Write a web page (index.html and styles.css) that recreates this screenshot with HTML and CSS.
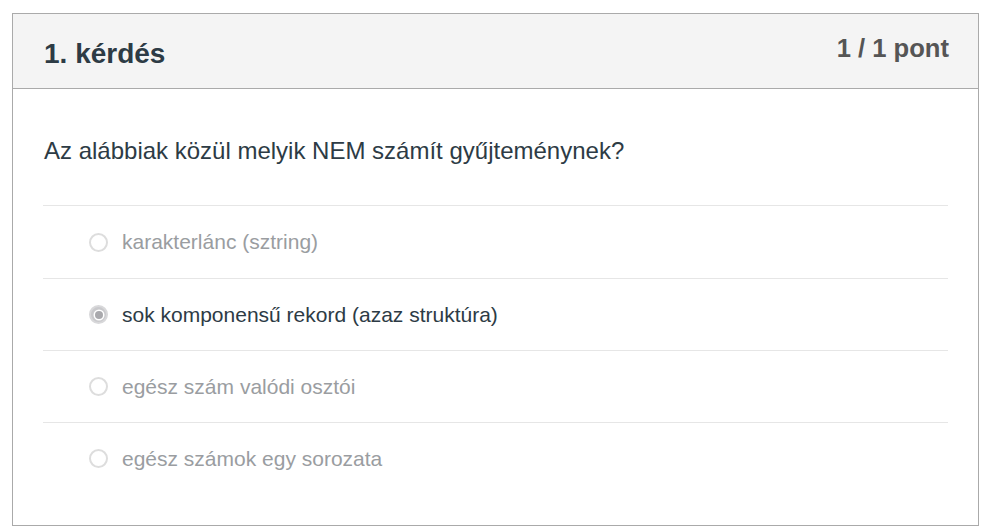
FILE: index.html
```html
<!DOCTYPE html>
<html lang="hu">
<head>
<meta charset="utf-8">
<link rel="stylesheet" href="styles.css">
<title>1. kérdés</title>
</head>
<body>
<div class="card">
  <div class="card-header">
    <h2 class="title">1. kérdés</h2>
    <div class="points">1 / 1 pont</div>
  </div>
  <div class="card-body">
    <p class="question">Az alábbiak közül melyik NEM számít gyűjteménynek?</p>
    <ul class="answers">
      <li class="answer"><span class="radio"></span><span class="label">karakterlánc (sztring)</span></li>
      <li class="answer selected"><span class="radio"></span><span class="label">sok komponensű rekord (azaz struktúra)</span></li>
      <li class="answer"><span class="radio"></span><span class="label">egész szám valódi osztói</span></li>
      <li class="answer"><span class="radio"></span><span class="label">egész számok egy sorozata</span></li>
    </ul>
  </div>
</div>
</body>
</html>
```

FILE: styles.css
```css
html, body {
  margin: 0;
  padding: 0;
  background: #ffffff;
}
body {
  font-family: "Liberation Sans", Arial, sans-serif;
  color: #2d3b45;
  padding: 13px 10px 0 12px;
}
.card {
  width: 967px;
  box-sizing: border-box;
  border: 1px solid #aaaaaa;
  height: 513px;
}
.card-header {
  display: flex;
  justify-content: space-between;
  align-items: flex-start;
  background: #f4f4f4;
  border-bottom: 1px solid #aaaaaa;
  height: 74px;
  padding: 0 29px 0 31px;
}
.title {
  margin: 26px 0 0 0;
  font-size: 28px;
  line-height: 28px;
  font-weight: bold;
  color: #2d3b45;
}
.points {
  margin-top: 21px;
  font-size: 25.6px;
  line-height: 26px;
  font-weight: bold;
  color: #555555;
}
.card-body {
  padding: 0 30px 0 30px;
}
.question {
  margin: 47px 0 39px 1px;
  font-size: 24px;
  line-height: 30px;
}
.answers {
  list-style: none;
  margin: 0;
  padding: 0;
}
.answer {
  display: flex;
  align-items: center;
  height: 72px;
  box-sizing: border-box;
  border-top: 1px solid #e6e6e6;
  padding-left: 46px;
  color: #9a9da1;
  font-size: 21px;
}
.answer:first-child {
  height: 73px;
}
.radio {
  width: 19px;
  height: 19px;
  box-sizing: border-box;
  border: 2px solid #dddddd;
  border-radius: 50%;
  margin-right: 14px;
  flex: none;
}
.selected {
  color: #2d3b45;
}
.selected .radio {
  background: #c9c9cc;
  border-color: #d8d8da;
  position: relative;
}
.selected .radio::after {
  content: "";
  position: absolute;
  left: 3.5px;
  top: 3.5px;
  width: 8px;
  height: 8px;
  border-radius: 50%;
  background: #a9a9ad;
  box-shadow: 0 0 0 1.5px #ffffff;
}
```
